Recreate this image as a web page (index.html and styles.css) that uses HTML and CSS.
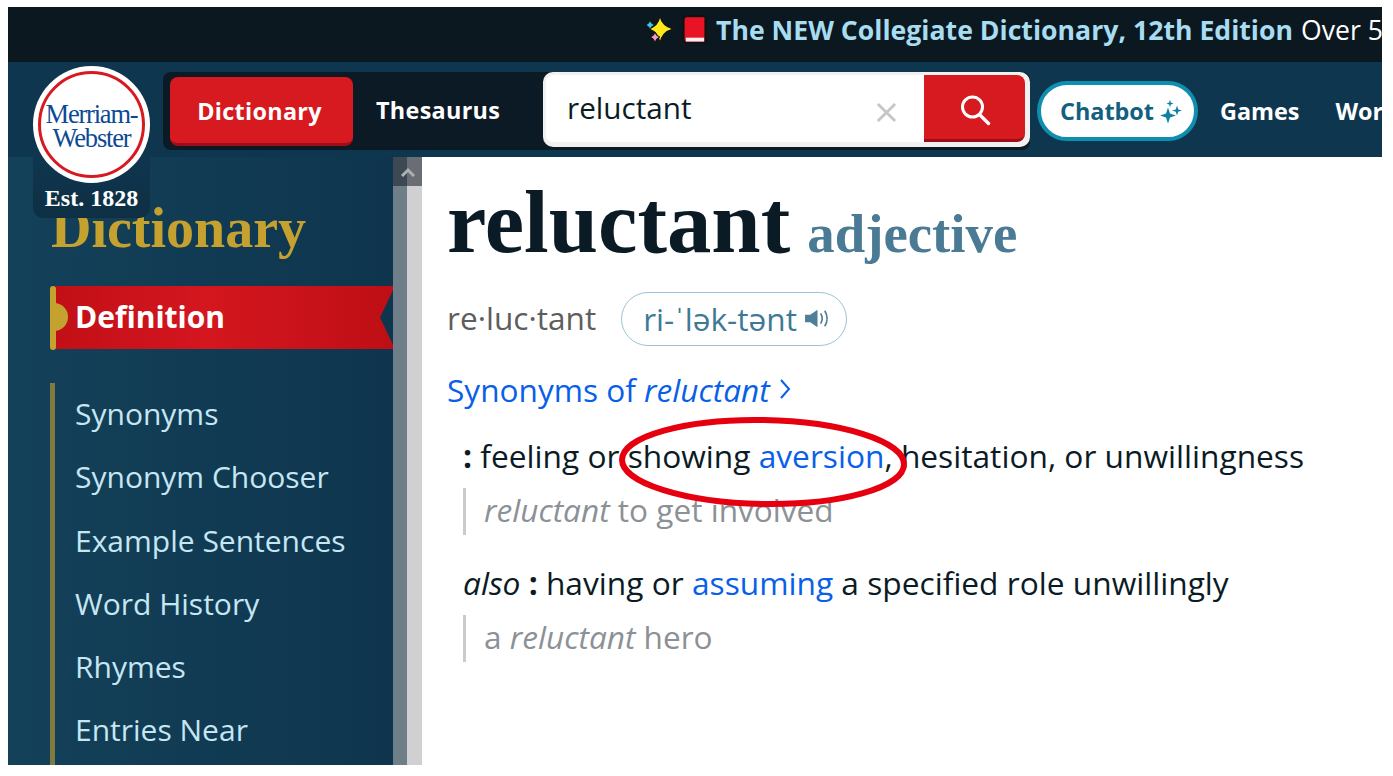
FILE: index.html
```html
<!DOCTYPE html>
<html lang="en">
<head>
<meta charset="utf-8">
<title>Reluctant Definition</title>
<link rel="stylesheet" href="styles.css">
</head>
<body>
<div class="frame">
  <div class="promo">
    <svg class="emoji-spark" viewBox="0 0 28 28" width="28" height="28"><path d="M15 0 Q17 10 28 13 Q17 16 15 27 Q13 16 4 13 Q13 10 15 0 Z" fill="#ffe81a" stroke="#111" stroke-width="1.2"/><path d="M5 4 Q5.8 8 10 9 Q5.8 10 5 14 Q4.2 10 0.5 9 Q4.2 8 5 4 Z" fill="#3bc4ec" stroke="#111" stroke-width=".9"/><path d="M10 16 Q10.8 20.2 15 21 Q10.8 22 10 27 Q9.2 22 5 21 Q9.2 20.2 10 16 Z" fill="#f49ac1" stroke="#111" stroke-width=".9"/></svg>
    <svg class="emoji-book" viewBox="0 0 26 31" width="25" height="31"><path d="M5 1.5 H24.5 V29.5 H5 Q1.5 29.5 1.5 26 V5 Q1.5 1.5 5 1.5 Z" fill="#e81425" stroke="#111" stroke-width="2.4"/><rect x="4" y="24" width="19" height="4" fill="#f6f0f0"/></svg>
    <span class="promo-title">The NEW Collegiate Dictionary, 12th Edition</span>
    <span class="promo-sub">Over 5,000 new words</span>
  </div>
  <header class="head">
    <div class="tabs">
      <a class="tab tab-on">Dictionary</a>
      <a class="tab">Thesaurus</a>
      <div class="search">
        <span class="search-text">reluctant</span>
        <svg class="clear" viewBox="0 0 22 22" width="21" height="21"><path d="M2 2 L20 20 M20 2 L2 20" stroke="#c4c6c8" stroke-width="3"/></svg>
        <span class="search-btn"><svg viewBox="0 0 32 32" width="32" height="32"><circle cx="13.5" cy="13" r="10" fill="none" stroke="#fff" stroke-width="3"/><path d="M20.5 20.5 L29.5 29.5" stroke="#fff" stroke-width="3.4" stroke-linecap="round"/></svg></span>
      </div>
    </div>
    <a class="chatbot">Chatbot
      <svg viewBox="0 0 24 24" width="24" height="25"><path d="M9 8 L11 14 L17 16 L11 18 L9 24 L7 18 L1 16 L7 14 Z" fill="#0f7fa8"/><path d="M18 6 L19.2 10 L23 11 L19.2 12.2 L18 16 L16.8 12.2 L13 11 L16.8 10 Z" fill="#0f7fa8"/><path d="M11 0 L11.8 3 L14.5 4 L11.8 5 L11 8 L10.2 5 L7.5 4 L10.2 3 Z" fill="#0f7fa8"/></svg>
    </a>
    <a class="nav">Games</a>
    <a class="nav nav-last">Word of the Day</a>
  </header>
  <div class="main">
    <aside class="side">
      <div class="side-title">Dictionary</div>
      <div class="ribbon-wrap">
        <span class="ribbon-bar"></span>
        <span class="ribbon-knob"></span>
        <a class="ribbon">Definition</a>
      </div>
      <ul class="side-list">
        <li>Synonyms</li>
        <li>Synonym Chooser</li>
        <li>Example Sentences</li>
        <li>Word History</li>
        <li>Rhymes</li>
        <li>Entries Near</li>
      </ul>
    </aside>
    <div class="bar">
      <div class="bar-track"></div>
      <div class="bar-rail"></div>
      <div class="bar-up"><svg viewBox="0 0 16 10" width="16" height="10"><path d="M2 9 L8 3 L14 9" fill="none" stroke="#aab0b4" stroke-width="3"/></svg></div>
    </div>
    <main class="content">
      <h1 class="word">reluctant <span class="pos">adjective</span></h1>
      <div class="pron-row">
        <span class="syll">re·luc·tant</span>
        <span class="pron">ri-ˈlək-tənt
          <svg viewBox="0 0 26 20" width="27" height="21"><path d="M1 6.5 H6 L13 1.5 V18.5 L6 13.5 H1 Z" fill="#4f7f97"/><path d="M16 5 Q19 10 16 15 M20 2.5 Q24.5 10 20 17.5" fill="none" stroke="#4f7f97" stroke-width="1.6"/></svg>
        </span>
      </div>
      <a class="syn-link"><span>Synonyms of <em>reluctant</em></span>
        <svg viewBox="0 0 12 22" width="12" height="22"><path d="M2 2 L10 11 L2 20" fill="none" stroke="#0a5fe8" stroke-width="2"/></svg>
      </a>
      <p class="def"><b>:</b> feeling or showing <a>aversion</a>, hesitation, or unwillingness</p>
      <p class="ex"><em>reluctant</em> to get involved</p>
      <p class="def def-also"><em>also</em> <b>:</b> having or <a>assuming</a> a specified role unwillingly</p>
      <p class="ex">a <em>reluctant</em> hero</p>
    </main>
  </div>
  <div class="logo">
    <div class="logo-disc"><div class="logo-ring"><span>Merriam-</span><span>Webster</span></div></div>
    <div class="logo-est">Est. 1828</div>
  </div>
  <svg class="circle" viewBox="0 0 292 94" width="292" height="94"><ellipse cx="146" cy="47" rx="141" ry="42" fill="none" stroke="#e6000f" stroke-width="6" transform="rotate(1 146 47)"/></svg>
</div>
</body>
</html>
```
FILE: styles.css
```css
html, body { margin: 0; padding: 0; background: #fff; }
body { padding: 7px 11px 11px 8px; font-family: "Open Sans", "Liberation Sans", sans-serif; }
a { text-decoration: none; }
.frame { position: relative; width: 1374px; height: 758px; overflow: hidden; display: flex; flex-direction: column; }

.promo { height: 55px; flex: none; background: #0b1820; display: flex; align-items: center; padding: 0 0 10px 637px; white-space: nowrap; box-sizing: border-box; }
.emoji-spark { margin-right: 9px; flex: none; }
.emoji-book { margin-right: 9px; flex: none; }
.promo-title { font-size: 26.65px; font-weight: 700; color: #a8dcf0; margin-right: 8px; }
.promo-sub { font-size: 26.6px; color: #fff; }

.head { height: 95px; flex: none; background: #0f364f; display: flex; align-items: flex-start; padding-left: 155px; box-sizing: border-box; white-space: nowrap; }
.tabs { margin-top: 10px; height: 78px; width: 867px; background: #0c1a26; border-radius: 8px; display: flex; align-items: flex-start; padding-left: 7px; box-sizing: border-box; flex: none; }
.tab { height: 66px; margin-top: 5px; display: flex; align-items: center; font-size: 23.4px; font-weight: 700; color: #fff; letter-spacing: .3px; }
.tab-on { width: 183px; height: 69px; box-sizing: border-box; justify-content: center; padding: 2px 4px 0 0; background: #d71920; border-bottom: 3px solid #a00d18; border-radius: 8px; margin-right: 23px; }
.search { margin-left: auto; width: 487px; height: 75px; background: #fff; border-radius: 10px; border: 3px solid #f1f1f1; border-right-width: 5px; border-bottom-width: 5px; box-sizing: border-box; display: flex; align-items: flex-start; flex: none; }
.search-text { flex: 1; font-size: 29.7px; color: #0b1b26; padding-left: 21px; line-height: 65px; height: 66px; }
.clear { margin: 27px 27px 0 0; }
.search-btn { width: 101px; height: 67px; background: #d71920; border-bottom: 3px solid #a00d18; border-radius: 0 8px 8px 0; display: flex; align-items: center; justify-content: center; box-sizing: border-box; padding-top: 5px; flex: none; }
.chatbot { margin: 19px 0 0 7px; width: 161px; height: 60px; flex: none; box-sizing: border-box; background: #fff; border: 4px solid #0f8fb0; border-radius: 30px; display: flex; align-items: center; justify-content: flex-start; gap: 5px; padding-left: 19px; font-size: 23.4px; font-weight: 700; color: #135f7f; }
.nav { margin: 33px 0 0 22px; font-size: 23.4px; font-weight: 700; color: #fff; }
.nav-last { margin-left: 36px; }

.main { flex: 1; display: flex; min-height: 0; }
.side { width: 385px; flex: none; background: linear-gradient(90deg, #134159, #0f354e); box-sizing: border-box; position: relative; }
.side-title { font-family: "Liberation Serif", serif; font-weight: 700; font-size: 56px; color: #c5a22f; position: absolute; left: 43px; top: 36px; line-height: 70px; }
.ribbon-wrap { position: absolute; left: 42px; top: 129px; right: 0; height: 64px; }
.ribbon-bar { position: absolute; left: 0; top: 0; width: 6px; height: 64px; border-radius: 3px; background: #c5a22f; z-index: 1; }
.ribbon-knob { position: absolute; left: 4px; top: 17px; width: 14px; height: 28px; background: #c5a22f; border-radius: 0 14px 14px 0; z-index: 1; }
.ribbon { position: absolute; left: 5px; top: 0; right: 0; height: 63px; box-sizing: border-box; padding: 0 0 3px 20px; display: flex; align-items: center; font-size: 30px; font-weight: 700; color: #fff; background: linear-gradient(90deg, #c20f16, #d4161f 45%, #be0f14); clip-path: polygon(0 0, 100% 0, 100% 4px, 325px 50%, 100% 59px, 100% 100%, 0 100%); }
.side-list { position: absolute; left: 42px; top: 226px; bottom: 0; margin: 0; width: 300px; list-style: none; padding: 0 0 0 20px; border-left: 5px solid #7f7b40; }
.side-list li { font-size: 30px; line-height: 61.4px; color: #c5e6f2; height: 63.3px; white-space: nowrap; }

.bar { width: 29px; flex: none; display: flex; position: relative; }
.bar-track { width: 14px; background: #6e7f8a; }
.bar-rail { width: 15px; background: #d0d0d2; }
.bar-up { position: absolute; left: 0; top: 0; width: 29px; height: 29px; background: rgba(20, 30, 40, .55); display: flex; align-items: center; justify-content: center; }

.content { flex: 1; padding: 0 0 0 25px; color: #0b1b26; min-width: 0; white-space: nowrap; }
.word { margin: 13px 0 0; height: 105px; font-family: "Liberation Serif", serif; font-weight: 700; font-size: 88.7px; line-height: 104px; color: #0b1b26; }
.pos { font-size: 54.8px; color: #4a7a94; margin-left: -5px; }
.pron-row { display: flex; align-items: center; margin-top: 17px; height: 54px; }
.syll { font-size: 31.6px; color: #5e5e5e; padding-bottom: 3px; }
.pron { margin-left: 25px; width: 226px; height: 54px; box-sizing: border-box; border: 1px solid #9cc3d5; border-radius: 27px; display: flex; align-items: center; justify-content: flex-start; gap: 7px; padding: 0 0 2px 21px; font-size: 31.6px; color: #3f7a94; }
.syn-link { display: flex; align-items: center; gap: 9px; margin-top: 19px; height: 48px; font-size: 31.6px; color: #0a5fe8; }
.def { margin: 18px 0 0 16px; font-size: 31.7px; line-height: 50px; height: 50px; color: #0b1b26; }
.def a { color: #0a5fe8; }
.def-also { margin-top: 23px; }
.ex { margin: 7px 0 0 16px; height: 47px; line-height: 43px; font-size: 31.6px; color: #8c9196; border-left: 3px solid #c9cbcd; padding-left: 18px; }

.logo { position: absolute; left: 25px; top: 59px; width: 117px; height: 152px; background: linear-gradient(#0f364f 60%, #0e2f44); border-radius: 58px 58px 10px 10px; }
.logo-disc { width: 117px; height: 117px; background: #fff; border-radius: 50%; display: flex; align-items: center; justify-content: center; }
.logo-ring { width: 107px; height: 107px; box-sizing: border-box; border: 3px solid #d71920; border-radius: 50%; display: flex; flex-direction: column; align-items: center; justify-content: center; padding-top: 3px; font-family: "Liberation Serif", serif; font-size: 26.5px; line-height: 24px; letter-spacing: -1.2px; color: #0d4a94; }
.logo-est { text-align: center; font-family: "Liberation Serif", serif; font-weight: 700; font-size: 24px; line-height: 30px; color: #fff; }

.circle { position: absolute; left: 609px; top: 408px; pointer-events: none; }
```
